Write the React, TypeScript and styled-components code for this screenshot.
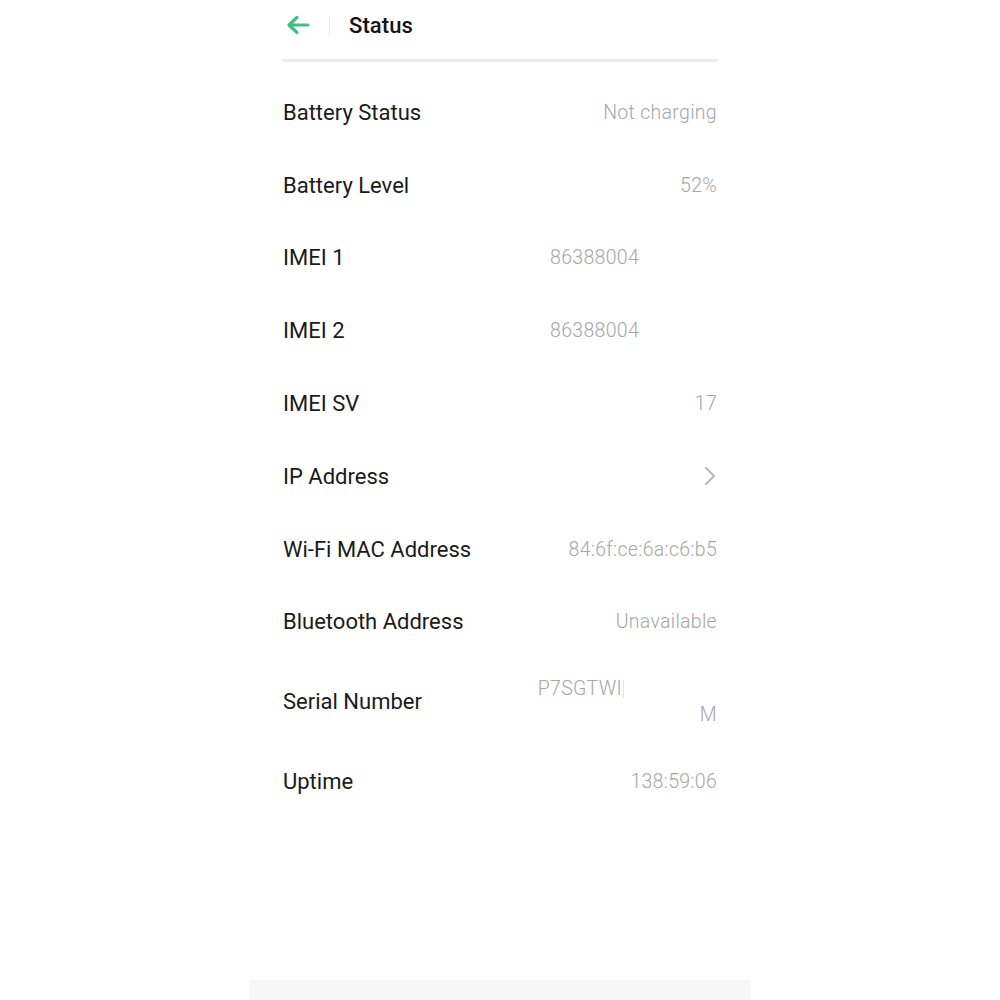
import React from "react";
import styled, { createGlobalStyle } from "styled-components";

const Global = createGlobalStyle`
  html, body { margin: 0; padding: 0; background: #ffffff; }
  body { font-family: Roboto, "Noto Sans", Arial, sans-serif; }
`;

const Page = styled.div`
  width: 1000px;
  height: 1000px;
  display: flex;
  flex-direction: column;
  align-items: center;
  background: #fff;
  overflow: hidden;
`;

const Column = styled.div`
  width: 436px;
  display: flex;
  flex-direction: column;
  flex: 1;
`;

const Header = styled.div`
  height: 50px;
  display: flex;
  align-items: center;
  padding-left: 4px;
`;

const BackButton = styled.div`
  width: 24px;
  height: 24px;
  display: flex;
  align-items: center;
  justify-content: center;
`;

const VDivider = styled.div`
  width: 1px;
  height: 19px;
  background: #e6e6e6;
  margin: 0 19px 0 19px;
`;

const Title = styled.div`
  font-size: 22px;
  font-weight: 500;
  color: #141414;
  letter-spacing: 0.1px;
`;

const Separator = styled.div`
  height: 3px;
  background: #ececec;
  margin-top: 9px;
  margin-bottom: 14px;
`;

const List = styled.div`
  display: flex;
  flex-direction: column;
`;

const Row = styled.div<{ $tall?: boolean }>`
  height: ${(p) => (p.$tall ? "87px" : "72.8px")};
  display: flex;
  align-items: center;
  justify-content: space-between;
`;

const Label = styled.div`
  font-size: 22px;
  color: #1a1a1a;
  padding-left: 1px;
`;

const Value = styled.div<{ $pad?: number }>`
  font-size: 19.5px;
  font-weight: 300;
  color: #a6a6a6;
  padding-right: ${(p) => p.$pad ?? 1}px;
  letter-spacing: 0.3px;
`;

const Stack = styled.div`
  display: flex;
  flex-direction: column;
  align-items: flex-end;
  font-size: 19.5px;
  font-weight: 300;
  color: #a6a6a6;
  line-height: 26px;
`;

const StackLine = styled.div<{ $pad?: number }>`
  padding-right: ${(p) => p.$pad ?? 1}px;
  letter-spacing: 0.3px;
  display: flex;
  align-items: center;
`;

const Caret = styled.span`
  display: inline-block;
  width: 1px;
  height: 18px;
  background: #e2e2e2;
  margin-left: 1px;
`;

const Chevron = styled.div`
  width: 14px;
  height: 20px;
  display: flex;
  align-items: center;
  justify-content: center;
  margin-right: 1px;
`;

const BottomBar = styled.div`
  width: 502px;
  height: 20px;
  background: #f7f7f7;
  border-top: 1px solid #fbfbfb;
`;

type Item = { label: string; value?: string; pad?: number; chevron?: boolean };

const items: Item[] = [
  { label: "Battery Status", value: "Not charging" },
  { label: "Battery Level", value: "52%" },
  { label: "IMEI 1", value: "86388004", pad: 79 },
  { label: "IMEI 2", value: "86388004", pad: 79 },
  { label: "IMEI SV", value: "17" },
  { label: "IP Address", chevron: true },
  { label: "Wi-Fi MAC Address", value: "84:6f:ce:6a:c6:b5" },
  { label: "Bluetooth Address", value: "Unavailable" },
];

export default function App() {
  return (
    <>
      <Global />
      <Page>
        <Column>
          <Header>
            <BackButton>
              <svg width="24" height="20" viewBox="0 0 24 20">
                <path
                  d="M22 10H3.5M11 2.5L3 10l8 7.5"
                  fill="none"
                  stroke="#3fbf8b"
                  strokeWidth="3.2"
                  strokeLinecap="round"
                  strokeLinejoin="round"
                />
              </svg>
            </BackButton>
            <VDivider />
            <Title>Status</Title>
          </Header>
          <Separator />
          <List>
            {items.map((it) => (
              <Row key={it.label}>
                <Label>{it.label}</Label>
                {it.chevron ? (
                  <Chevron>
                    <svg width="12" height="20" viewBox="0 0 12 20">
                      <path
                        d="M2 2l8 8-8 8"
                        fill="none"
                        stroke="#b9b9b9"
                        strokeWidth="2"
                        strokeLinecap="round"
                        strokeLinejoin="round"
                      />
                    </svg>
                  </Chevron>
                ) : (
                  <Value $pad={it.pad}>{it.value}</Value>
                )}
              </Row>
            ))}
            <Row $tall>
              <Label>Serial Number</Label>
              <Stack>
                <StackLine $pad={94}>
                  P7SGTWI
                  <Caret />
                </StackLine>
                <StackLine>M</StackLine>
              </Stack>
            </Row>
            <Row>
              <Label>Uptime</Label>
              <Value>138:59:06</Value>
            </Row>
          </List>
        </Column>
        <BottomBar />
      </Page>
    </>
  );
}
